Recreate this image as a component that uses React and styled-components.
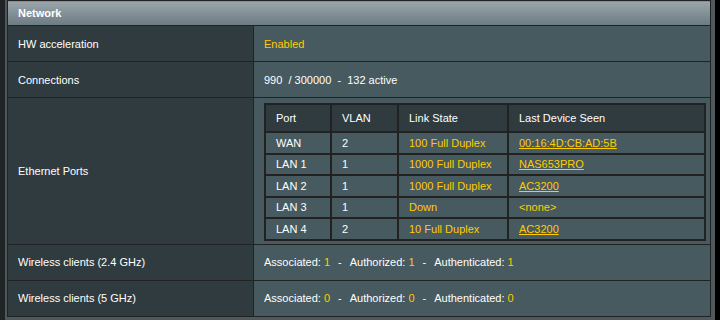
import React from 'react';
import styled, { createGlobalStyle } from 'styled-components';

const Global = createGlobalStyle`
  body {
    margin: 0;
    background: #000;
    font-family: "Liberation Sans", Arial, sans-serif;
  }
`;

const Frame = styled.div`
  width: 710px;
  height: 320px;
  background: #4d595d;
  border-left: 5px solid #202427;
  overflow: hidden;
`;

const FormTable = styled.table`
  width: 704px;
  margin-left: 2px;
  border-collapse: collapse;
  border: 1px solid #222;
  font-size: 11px;
  color: #fff;
`;

const Head = styled.th`
  height: 24px;
  padding: 0 0 0 10px;
  text-align: left;
  font-weight: bold;
  font-size: 11px;
  background: linear-gradient(#9aa6ab, #6c7a82);
  border-bottom: 1px solid #222;
`;

const Label = styled.th`
  width: 235px;
  padding: 0 0 0 10px;
  height: ${(p) => p.$h || 35}px;
  text-align: left;
  font-weight: normal;
  background: #2f3b3f;
  border: 1px solid #222;
`;

const Value = styled.td`
  padding: ${(p) => (p.$inner ? '5px 4px 3px 10px' : '0 0 0 10px')};
  background: #475a5f;
  border: 1px solid #222;
`;

const Yellow = styled.span`
  color: #ffcc00;
`;

const Sep = styled.span`
  padding: 0 8px;
`;

const PortTable = styled.table`
  width: 442px;
  border-collapse: collapse;
  border: 2px solid #222;
  font-size: 11px;
`;

const PortHead = styled.th`
  height: 26px;
  padding: 0 0 0 10px;
  text-align: left;
  font-weight: normal;
  background: #2f3b3f;
  border: 2px solid #222;
  width: ${(p) => (p.$w ? `${p.$w}px` : 'auto')};
`;

const PortCell = styled.td`
  height: 19.5px;
  padding: 0 0 0 10px;
  background: #475a5f;
  border: 2px solid #222;
  color: ${(p) => (p.$yellow ? '#ffcc00' : '#fff')};
  text-decoration: ${(p) => (p.$link ? 'underline' : 'none')};
`;

const ports = [
  { port: 'WAN', vlan: '2', state: '100 Full Duplex', dev: '00:16:4D:CB:AD:5B', link: true },
  { port: 'LAN 1', vlan: '1', state: '1000 Full Duplex', dev: 'NAS653PRO', link: true },
  { port: 'LAN 2', vlan: '1', state: '1000 Full Duplex', dev: 'AC3200', link: true },
  { port: 'LAN 3', vlan: '1', state: 'Down', dev: '<none>', link: false },
  { port: 'LAN 4', vlan: '2', state: '10 Full Duplex', dev: 'AC3200', link: true },
];

function Clients({ assoc, auth, authd }) {
  return (
    <>
      Associated: <Yellow>{assoc}</Yellow>
      <Sep>-</Sep>
      Authorized: <Yellow>{auth}</Yellow>
      <Sep>-</Sep>
      Authenticated: <Yellow>{authd}</Yellow>
    </>
  );
}

export default function App() {
  return (
    <>
      <Global />
      <Frame>
        <FormTable>
          <thead>
            <tr>
              <Head colSpan={2}>Network</Head>
            </tr>
          </thead>
          <tbody>
            <tr>
              <Label>HW acceleration</Label>
              <Value><Yellow>Enabled</Yellow></Value>
            </tr>
            <tr>
              <Label>Connections</Label>
              <Value>990&nbsp; / 300000&nbsp; -&nbsp; 132 active</Value>
            </tr>
            <tr>
              <Label $h={144}>Ethernet Ports</Label>
              <Value $inner>
                <PortTable>
                  <thead>
                    <tr>
                      <PortHead $w={54}>Port</PortHead>
                      <PortHead $w={55}>VLAN</PortHead>
                      <PortHead $w={98}>Link State</PortHead>
                      <PortHead>Last Device Seen</PortHead>
                    </tr>
                  </thead>
                  <tbody>
                    {ports.map((p) => (
                      <tr key={p.port}>
                        <PortCell>{p.port}</PortCell>
                        <PortCell>{p.vlan}</PortCell>
                        <PortCell $yellow>{p.state}</PortCell>
                        <PortCell $yellow $link={p.link}>{p.dev}</PortCell>
                      </tr>
                    ))}
                  </tbody>
                </PortTable>
              </Value>
            </tr>
            <tr>
              <Label>Wireless clients (2.4 GHz)</Label>
              <Value><Clients assoc="1" auth="1" authd="1" /></Value>
            </tr>
            <tr>
              <Label>Wireless clients (5 GHz)</Label>
              <Value><Clients assoc="0" auth="0" authd="0" /></Value>
            </tr>
          </tbody>
        </FormTable>
      </Frame>
    </>
  );
}
